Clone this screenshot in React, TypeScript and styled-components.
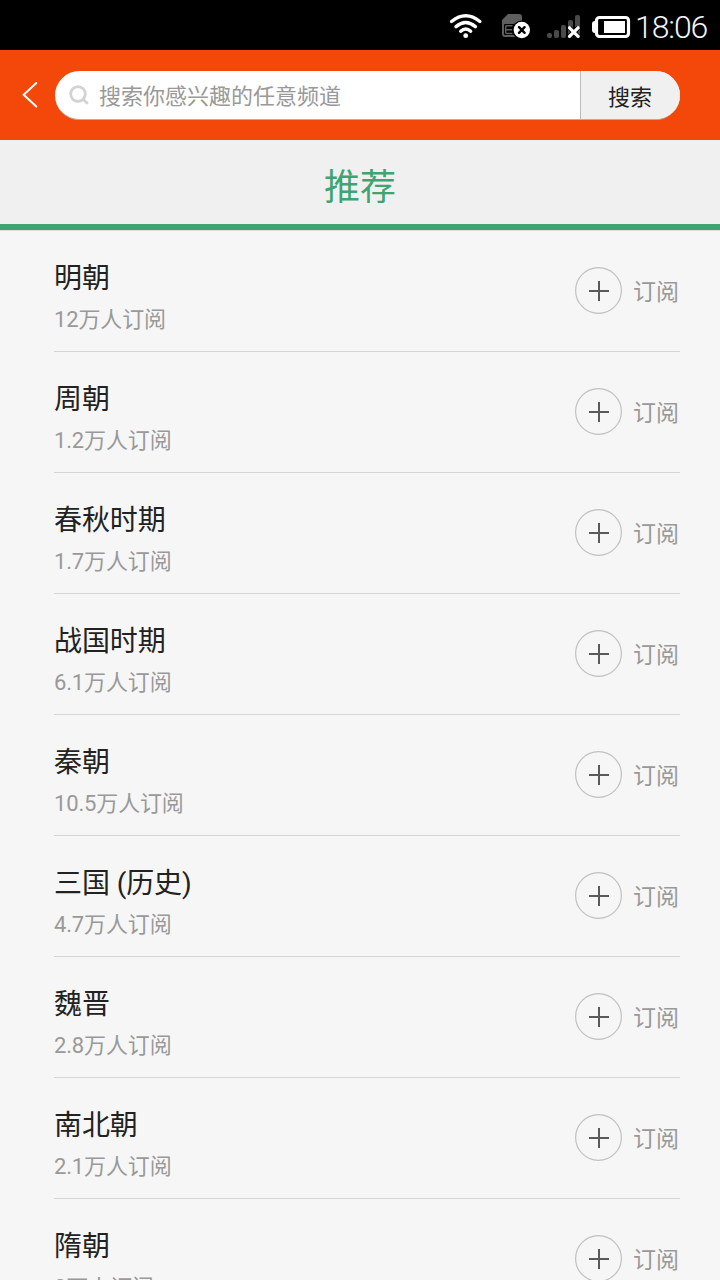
import React from "react";
import styled, { createGlobalStyle } from "styled-components";

const GlobalStyle = createGlobalStyle`
  * { box-sizing: border-box; }
  body {
    margin: 0;
    background: #f6f6f6;
    font-family: Roboto, "Noto Sans CJK SC", sans-serif;
  }
`;

const Screen = styled.div`
  width: 720px;
  height: 1280px;
  overflow: hidden;
  display: flex;
  flex-direction: column;
  background: #f6f6f6;
`;

const StatusBar = styled.div`
  flex: none;
  height: 50px;
  background: #000;
  display: flex;
  justify-content: flex-end;
  padding-right: 12px;
`;

const StatusIcons = styled.svg`
  display: block;
  flex: none;
`;

const Clock = styled.span`
  width: 73px;
  margin-left: 3px;
  color: #f4f4f4;
  font-size: 32px;
  font-weight: 300;
  line-height: 54px;
  white-space: nowrap;
  letter-spacing: -1.1px;
`;

const SearchHeader = styled.header`
  flex: none;
  height: 90px;
  display: flex;
  align-items: center;
  background: #f4480b;
  padding-left: 20px;
`;

const BackButton = styled.button`
  border: 0;
  padding: 0;
  width: 35px;
  height: 50px;
  background: none;
  display: flex;
  align-items: center;
`;

const SearchBox = styled.div`
  width: 625px;
  height: 49px;
  display: flex;
  border-radius: 25px;
  overflow: hidden;
  background: #fff;
  border-bottom: 1px solid #c9a79b;
`;

const SearchField = styled.div`
  flex: 1;
  display: flex;
  align-items: center;
  padding-left: 14px;
  gap: 10px;
  color: #999;
  font-size: 22px;
`;

const Placeholder = styled.span`
  padding-top: 3px;
  line-height: 45px;
`;

const SearchButton = styled.button`
  width: 100px;
  border: 0;
  border-left: 1px solid #bcbcbc;
  padding: 0 1px 0 0;
  background: #f0f0f0;
  color: #222;
  font: inherit;
  font-size: 22px;
`;

const SectionTitle = styled.h1`
  flex: none;
  margin: 0;
  height: 90px;
  padding-top: 6px;
  border-bottom: 6px solid #3fa372;
  background: #f0f0f0;
  color: #3fa372;
  text-align: center;
  font-size: 36px;
  font-weight: 400;
  line-height: 84px;
`;

const ChannelList = styled.ul`
  list-style: none;
  margin: 0;
  padding: 0 40px 0 54px;
  border-top: 1px solid #dedede;
`;

const ChannelRow = styled.li`
  height: 121px;
  display: flex;
  justify-content: space-between;
  border-bottom: 1px solid #d5d5d5;
`;

const ChannelInfo = styled.div`
  padding-top: 28px;
`;

const ChannelName = styled.div`
  color: #222;
  font-size: 28px;
  line-height: 40px;
  letter-spacing: -0.1px;
`;

const ChannelCount = styled.div`
  margin-top: 5px;
  color: #999;
  font-size: 22px;
  line-height: 32px;
  letter-spacing: -0.15px;
`;

const SubscribeButton = styled.button`
  align-self: flex-start;
  margin-top: 36px;
  height: 47px;
  padding: 0 1px 0 0;
  border: 0;
  background: none;
  display: flex;
  align-items: center;
  gap: 11px;
  color: #999;
  font: inherit;
  font-size: 23px;
`;

const SubscribeLabel = styled.span`
  padding-top: 4px;
  line-height: 43px;
`;

const channels = [
  { name: "明朝", count: "12万人订阅" },
  { name: "周朝", count: "1.2万人订阅" },
  { name: "春秋时期", count: "1.7万人订阅" },
  { name: "战国时期", count: "6.1万人订阅" },
  { name: "秦朝", count: "10.5万人订阅" },
  { name: "三国 (历史)", count: "4.7万人订阅" },
  { name: "魏晋", count: "2.8万人订阅" },
  { name: "南北朝", count: "2.1万人订阅" },
  { name: "隋朝", count: "2万人订阅" },
];

function DeviceIcons() {
  return (
    <StatusIcons width="192" height="50" viewBox="440 0 192 50">
      <g fill="none" stroke="#fff" strokeWidth="3.4" strokeLinecap="round">
        <path d="M451.5 21.5 Q465.7 10 479.9 21.5" />
        <path d="M456 26.6 Q465.7 18.5 475.4 26.6" />
        <path d="M460.7 31.2 Q465.7 27 470.7 31.2" />
      </g>
      <circle cx="465.7" cy="35.7" r="2.4" fill="#fff" />
      <path d="M502 20 L508 14 H519 Q522 14 522 17 V37 H505 Q502 37 502 34Z" fill="#5e5e5e" />
      <rect x="504" y="24" width="15" height="11" rx="1" fill="#000" />
      <path d="M512.5 25.7 H507 Q505.700 25.700 505.700 27 V32.300 Q505.700 33.600 507 33.600 H512.500 M505.700 29.700 H512" stroke="#5e5e5e" strokeWidth="1.5" fill="none" />
      <circle cx="521.8" cy="30" r="9.6" fill="#000" />
      <circle cx="521.8" cy="30" r="8.2" fill="#fff" />
      <path d="M519 27.2 l5.6 5.6 M524.6 27.2 l-5.6 5.6" stroke="#000" strokeWidth="2.4" strokeLinecap="round" />
      <g fill="#4a4a4a">
        <rect x="547" y="33" width="5" height="5" rx="2" />
        <rect x="554" y="30" width="5" height="8" rx="2" />
        <rect x="561" y="25" width="5" height="13" rx="2" />
        <rect x="568" y="20" width="5" height="18" rx="2" />
        <rect x="575" y="15" width="5" height="23" rx="2" />
      </g>
      <path d="M569.5 27.8 l8.6 8.6 M578.1 27.8 l-8.6 8.6" stroke="#000" strokeWidth="5" />
      <path d="M569.5 27.8 l8.6 8.6 M578.1 27.8 l-8.6 8.6" stroke="#fff" strokeWidth="3.2" strokeLinecap="round" />
      <path d="M597 21 H595 Q592 21 592 24 V30 Q592 33 595 33 H597Z" fill="#fff" />
      <rect x="596.5" y="17.5" width="32" height="19" rx="3" fill="none" stroke="#fff" strokeWidth="3.2" />
      <rect x="604" y="21" width="21" height="12" fill="#fff" />
    </StatusIcons>
  );
}

function PlusIcon() {
  return (
    <svg width="47" height="47" viewBox="0 0 47 47">
      <circle cx="23.5" cy="23.5" r="22.9" fill="none" stroke="#c1c1c1" strokeWidth="1.2" />
      <path d="M14 24 H34 M24 14 V34" stroke="#5a5a5a" strokeWidth="2" />
    </svg>
  );
}

export default function App() {
  return (
    <>
      <GlobalStyle />
      <Screen>
        <StatusBar>
          <DeviceIcons />
          <Clock>18:06</Clock>
        </StatusBar>
        <SearchHeader>
          <BackButton aria-label="返回">
            <svg width="20" height="28" viewBox="0 0 20 28">
              <path d="M16.3 2 L3.7 13.7 L16.3 25.5" fill="none" stroke="#fff" strokeWidth="2" strokeLinecap="round" />
            </svg>
          </BackButton>
          <SearchBox>
            <SearchField>
              <svg width="20" height="20" viewBox="0 0 20 20">
                <circle cx="9" cy="9" r="7.3" fill="none" stroke="#d3d3d3" strokeWidth="2.8" />
                <path d="M14.2 14.2 L18 18" stroke="#d3d3d3" strokeWidth="2.8" strokeLinecap="round" />
              </svg>
              <Placeholder>搜索你感兴趣的任意频道</Placeholder>
            </SearchField>
            <SearchButton>搜索</SearchButton>
          </SearchBox>
        </SearchHeader>
        <SectionTitle>推荐</SectionTitle>
        <ChannelList>
          {channels.map((channel) => (
            <ChannelRow key={channel.name}>
              <ChannelInfo>
                <ChannelName>{channel.name}</ChannelName>
                <ChannelCount>{channel.count}</ChannelCount>
              </ChannelInfo>
              <SubscribeButton>
                <PlusIcon />
                <SubscribeLabel>订阅</SubscribeLabel>
              </SubscribeButton>
            </ChannelRow>
          ))}
        </ChannelList>
      </Screen>
    </>
  );
}
